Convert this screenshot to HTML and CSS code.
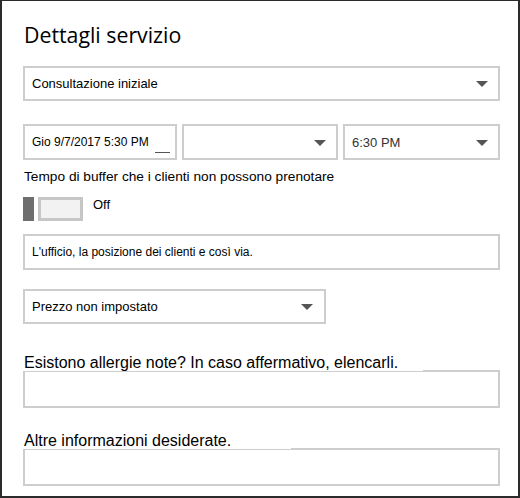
FILE: index.html
```html
<!DOCTYPE html>
<html lang="it">
<head>
<meta charset="utf-8">
<title>Dettagli servizio</title>
<link rel="stylesheet" href="styles.css">
</head>
<body>
<div class="panel">
  <h1 class="title">Dettagli servizio</h1>

  <div class="field select wide">
    <span class="value">Consultazione iniziale</span>
    <span class="arrow"></span>
  </div>

  <div class="date-row">
    <div class="field date">
      <span class="value small">Gio 9/7/2017 5:30 PM</span>
      <span class="underscore"></span>
    </div>
    <div class="field select mid">
      <span class="value"></span>
      <span class="arrow"></span>
    </div>
    <div class="field select end">
      <span class="value time">6:30 PM</span>
      <span class="arrow"></span>
    </div>
  </div>

  <div class="buffer-label">Tempo di buffer che i clienti non possono prenotare</div>

  <div class="toggle-row">
    <span class="toggle-knob"></span>
    <span class="toggle-track"></span>
    <span class="toggle-text">Off</span>
  </div>

  <div class="field location">
    <span class="value small">L'ufficio, la posizione dei clienti e così via.</span>
  </div>

  <div class="field select price">
    <span class="value">Prezzo non impostato</span>
    <span class="arrow"></span>
  </div>

  <div class="q-label q1">Esistono allergie note? In caso affermativo, elencarli.</div>
  <div class="field textbox"></div>

  <div class="q-label q2">Altre informazioni desiderate.</div>
  <div class="field textbox"></div>
</div>
</body>
</html>
```

FILE: styles.css
```css
* { box-sizing: border-box; }

html, body {
  margin: 0;
  padding: 0;
  background: #ffffff;
}

body {
  font-family: "Liberation Sans", Arial, sans-serif;
  color: #000;
}

.panel {
  width: 520px;
  height: 498px;
  border: 2px solid #2b2b2b;
  border-top-width: 1px;
  padding: 0 18px 0 21px;
  display: flex;
  flex-direction: column;
  align-items: flex-start;
}

.title {
  margin: 21px 0 0 1px;
  font-family: "Open Sans", "Liberation Sans", sans-serif;
  font-weight: 400;
  font-size: 21.3px;
  line-height: 26px;
  color: #000;
}

.field {
  border: 2px solid #cdcdcd;
  background: #fff;
  display: flex;
  align-items: center;
  padding: 0 8px 0 7px;
}

.value {
  font-size: 13px;
  flex: 1;
  white-space: nowrap;
}

.value.small { font-size: 12px; }

.value.time {
  font-size: 13px;
  color: #333;
}

.arrow {
  width: 0;
  height: 0;
  border-left: 6px solid transparent;
  border-right: 6px solid transparent;
  border-top: 6px solid #555;
  margin-right: 2px;
  margin-top: 1px;
}

.wide {
  width: 477px;
  height: 35px;
  margin-top: 18px;
}

.date-row {
  display: flex;
  gap: 5px;
  margin-top: 23px;
  width: 477px;
}

.date {
  width: 154px;
  height: 36px;
  position: relative;
}

.underscore {
  position: absolute;
  left: 130px;
  top: 26px;
  width: 15px;
  height: 1px;
  background: #555;
}

.mid {
  width: 156px;
  height: 36px;
}

.end {
  width: 157px;
  height: 36px;
}

.buffer-label {
  margin: 9px 0 0 1px;
  font-size: 13.7px;
  line-height: 16px;
}

.toggle-row {
  display: flex;
  align-items: flex-start;
  margin-top: 12px;
  height: 24px;
}

.toggle-knob {
  width: 11px;
  height: 24px;
  background: #6e6e6e;
}

.toggle-track {
  width: 45px;
  height: 24px;
  margin-left: 4px;
  border: 3px solid #c6c6c6;
  background: #f2f2f2;
}

.toggle-text {
  margin-left: 10px;
  margin-top: 0px;
  font-size: 13px;
  line-height: 16px;
}

.location {
  width: 477px;
  height: 36px;
  margin-top: 13px;
}

.price {
  width: 303px;
  height: 35px;
  margin-top: 19px;
  padding-right: 9px;
}

.q-label {
  position: relative;
  z-index: 1;
  background: #fff;
  font-size: 16px;
  line-height: 17px;
  padding-left: 1px;
  margin-bottom: -1px;
}

.q1 {
  margin-top: 30px;
  width: 400px;
}

.q2 {
  margin-top: 24px;
  width: 268px;
}

.textbox {
  width: 477px;
  height: 38px;
}
```
